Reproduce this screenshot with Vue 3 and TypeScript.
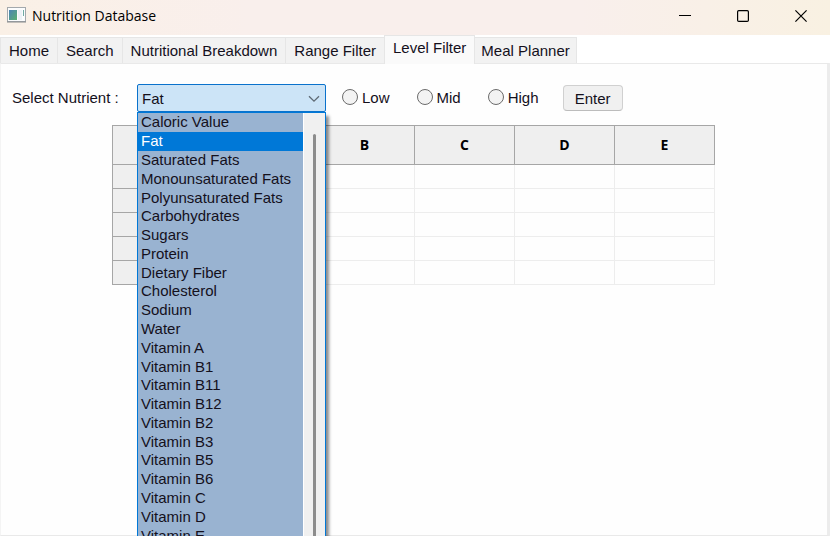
<script setup lang="ts">
import { ref } from 'vue'

const tabs: string[] = ['Home', 'Search', 'Nutritional Breakdown', 'Range Filter', 'Level Filter', 'Meal Planner']
const activeTab = ref('Level Filter')

const nutrients: string[] = [
  'Caloric Value', 'Fat', 'Saturated Fats', 'Monounsaturated Fats', 'Polyunsaturated Fats',
  'Carbohydrates', 'Sugars', 'Protein', 'Dietary Fiber', 'Cholesterol', 'Sodium', 'Water',
  'Vitamin A', 'Vitamin B1', 'Vitamin B11', 'Vitamin B12', 'Vitamin B2', 'Vitamin B3',
  'Vitamin B5', 'Vitamin B6', 'Vitamin C', 'Vitamin D', 'Vitamin E',
]
const nutrient = ref('Fat')

const levels: string[] = ['Low', 'Mid', 'High']
const level = ref('')

const columns: string[] = ['A', 'B', 'C', 'D', 'E']
const rowCount = 5
</script>

<template>
  <div class="window">
    <header class="titlebar">
      <svg class="app-icon" width="19" height="16" viewBox="0 0 19 16" aria-hidden="true">
        <defs>
          <linearGradient id="pane" x1="0" y1="0" x2="1" y2="1">
            <stop offset="0" stop-color="#4b83b5" />
            <stop offset="1" stop-color="#58b070" />
          </linearGradient>
        </defs>
        <rect x="0.5" y="0.5" width="18" height="14" fill="#fbfcfd" stroke="#a3a8ac" />
        <rect x="2" y="3" width="8" height="10" fill="url(#pane)" />
        <rect x="11" y="3" width="4" height="10" fill="#edf2f7" />
        <rect x="16" y="3" width="1" height="6" fill="#6faaa4" />
        <path d="M0 15H19" stroke="#85898c" />
      </svg>
      <h1 class="title">Nutrition Database</h1>
      <div class="controls">
        <button type="button" aria-label="Minimize">
          <svg width="12" height="12" viewBox="0 0 12 12"><path d="M0 5.5H12" stroke="#000" /></svg>
        </button>
        <button type="button" aria-label="Maximize">
          <svg width="12" height="12" viewBox="0 0 12 12"><rect x="0.6" y="0.6" width="10.8" height="10.8" rx="1.2" fill="none" stroke="#000" stroke-width="1.2" /></svg>
        </button>
        <button type="button" aria-label="Close">
          <svg width="12" height="12" viewBox="0 0 12 12"><path d="M0.4 0.4L11.6 11.6M11.6 0.4L0.4 11.6" stroke="#000" stroke-width="1.2" /></svg>
        </button>
      </div>
    </header>

    <nav class="tabs" role="tablist">
      <button
        v-for="tab in tabs"
        :key="tab"
        type="button"
        role="tab"
        class="tab"
        :class="{ active: tab === activeTab }"
        :aria-selected="tab === activeTab"
        @click="activeTab = tab"
      >{{ tab }}</button>
    </nav>

    <main class="panel">
      <form class="filters" @submit.prevent>
        <label class="caption" for="nutrient">Select Nutrient :</label>
        <div class="combo">
          <select id="nutrient" v-model="nutrient">
            <option v-for="name in nutrients" :key="name">{{ name }}</option>
          </select>
          <svg class="chevron" width="12" height="8" viewBox="0 0 12 8" aria-hidden="true">
            <path d="M1 1.2L6 6.2L11 1.2" fill="none" stroke="#5f6a75" stroke-width="1.3" />
          </svg>
          <div class="popup">
            <ul class="options" role="listbox" aria-label="Nutrients">
              <li
                v-for="name in nutrients"
                :key="name"
                role="option"
                :aria-selected="name === nutrient"
                :class="{ selected: name === nutrient }"
                @click="nutrient = name"
              >{{ name }}</li>
            </ul>
            <div class="scrollbar"><div class="thumb"></div></div>
          </div>
        </div>
        <div class="levels">
          <label v-for="name in levels" :key="name" class="level">
            <input v-model="level" type="radio" name="level" :value="name" />
            <span>{{ name }}</span>
          </label>
        </div>
        <button class="enter" type="submit">Enter</button>
      </form>

      <table class="grid">
        <thead>
          <tr>
            <th class="corner"></th>
            <th v-for="column in columns" :key="column" scope="col">{{ column }}</th>
          </tr>
        </thead>
        <tbody>
          <tr v-for="row in rowCount" :key="row">
            <th scope="row"></th>
            <td v-for="column in columns" :key="column"></td>
          </tr>
        </tbody>
      </table>
    </main>
  </div>
</template>

<style>
body {
  margin: 0;
  background: #fff;
}
</style>

<style scoped>
.window {
  display: flex;
  flex-direction: column;
  box-sizing: border-box;
  height: 100vh;
  overflow: hidden;
  font-family: "Liberation Sans", Arial, sans-serif;
  font-size: 15px;
  color: #14101c;
}

button,
select {
  font: inherit;
  color: inherit;
}

.titlebar {
  display: flex;
  flex: none;
  align-items: center;
  height: 35px;
  padding-left: 7px;
  background: linear-gradient(90deg, #faf0e6 0%, #f9efec 30%, #f9efec 70%, #f9f1e2 100%);
}

.app-icon {
  margin-bottom: 6px;
}

.title {
  margin: 0 0 4px 6px;
  font-family: "Open Sans", "Noto Sans", sans-serif;
  font-size: 14px;
  font-weight: 400;
  color: #000;
}

.controls {
  display: flex;
  height: 32px;
  margin-left: auto;
  margin-bottom: 3px;
}

.controls button {
  display: flex;
  align-items: center;
  justify-content: center;
  width: 58px;
  padding: 0;
  border: 0;
  background: none;
}

.tabs {
  display: flex;
  flex: none;
  align-items: flex-end;
  height: 28px;
}

.tab {
  height: 26px;
  padding: 0 8px;
  border: 1px solid #e6e6e6;
  border-right-width: 0;
  border-bottom: 0;
  background: #f2f2f2;
  line-height: 24px;
  white-space: nowrap;
}

.tab:last-child {
  padding: 0 6px;
  border-left-width: 0;
  border-right-width: 1px;
}

.tab.active {
  z-index: 1;
  height: 29px;
  padding: 0 8px 4px;
  border-right-width: 1px;
  margin-bottom: -1px;
  background: #fafafa;
}

.panel {
  flex: 1;
  min-height: 0;
  padding-right: 1px;
  border: 1px solid #e9e9e9;
  border-left-color: #f4f4f4;
  border-right: 3px solid #ececec;
  background: #fefefe;
}

.filters {
  display: flex;
  align-items: center;
  height: 28px;
  margin: 20px 11px 13px;
}

.caption {
  width: 125px;
  padding-bottom: 2px;
}

.combo {
  position: relative;
  width: 189px;
  height: 28px;
}

.combo select {
  width: 100%;
  height: 100%;
  padding: 0 24px 0 4px;
  border: 1px solid #0a72cc;
  border-radius: 2px;
  appearance: none;
  outline: none;
  background: #cce4f7;
}

.chevron {
  position: absolute;
  top: 11px;
  right: 6px;
  pointer-events: none;
}

.popup {
  position: absolute;
  z-index: 2;
  top: 28px;
  left: 0;
  right: 0;
  display: flex;
  border: 1px solid #0078d7;
  background: #f0f0f0;
  box-shadow: 3px 4px 3px rgba(0, 0, 0, 0.45);
}

.options {
  display: flex;
  flex: 1;
  flex-direction: column;
  height: 432px;
  margin: 0;
  padding: 0;
  list-style: none;
  background: #99b3d1;
}

.options li {
  display: flex;
  flex: 1;
  align-items: center;
  min-height: 0;
  padding-left: 3px;
  line-height: 18px;
  white-space: nowrap;
}

.options li.selected {
  background: #0078d7;
  color: #fff;
}

.scrollbar {
  display: flex;
  justify-content: center;
  width: 21px;
  padding-top: 21px;
  border-left: 1px solid #fff;
}

.thumb {
  width: 3px;
  border-radius: 2px 2px 0 0;
  background: #8c8c8c;
}

.levels {
  display: flex;
  gap: 27px;
  margin-left: 16px;
  padding-bottom: 2px;
}

.level {
  display: flex;
  align-items: center;
  gap: 4px;
}

.level input {
  width: 16px;
  height: 16px;
  margin: 0;
  border: 1px solid #6b6b6b;
  border-radius: 50%;
  appearance: none;
  background: #f3f3f3;
}

.level input:checked {
  border: 5px solid #0078d7;
}

.enter {
  width: 60px;
  height: 26px;
  margin-left: 24px;
  padding: 0;
  border: 1px solid #d0d0d0;
  border-bottom-color: #bcbcbc;
  border-radius: 4px;
  background: #f0f0f0;
}

.grid {
  margin: 0 auto;
  border-spacing: 0;
  table-layout: fixed;
  width: 603px;
}

.grid th,
.grid td {
  box-sizing: border-box;
  height: 24px;
  padding: 0;
  border: 0 solid #ededed;
  border-width: 0 1px 1px 0;
}

.grid th {
  border-color: #a6a6a6;
  background: #efefef;
  font-family: "Open Sans", "Noto Sans", sans-serif;
  font-size: 14px;
  font-weight: 700;
  color: #000;
}

.grid thead th {
  height: 40px;
  padding-bottom: 2px;
  border-top-width: 1px;
}

.grid th:first-child {
  width: 103px;
  border-left-width: 1px;
}
</style>
